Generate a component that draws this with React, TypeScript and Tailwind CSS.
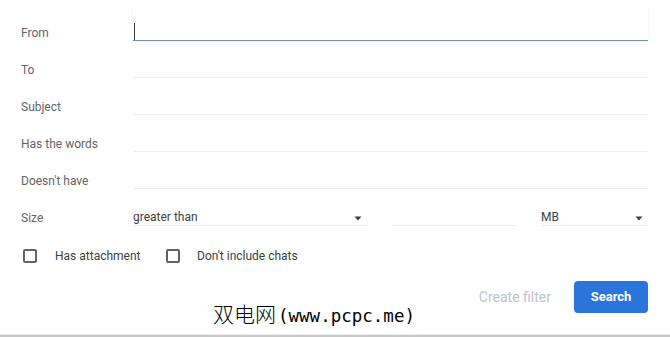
import React from "react";

function Caret() {
  return (
    <svg width="8" height="5" viewBox="0 0 8 5" className="mb-[4px] mr-[5px]">
      <path d="M0.5 0.5 L7.5 0.5 L4 4.5 Z" fill="#3c4043" />
    </svg>
  );
}

function Row({ label, children, focused }: { label: string; children?: React.ReactNode; focused?: boolean }) {
  return (
    <div className="flex h-[37px]">
      <div className="w-[112px] flex items-end leading-[16px] text-[12px] text-[#5f6368]">{label}</div>
      {children ?? (
        <div
          className={
            focused
              ? "flex-1 flex items-end border-b border-[#7d8a97] shadow-[0_2px_3px_rgba(120,170,230,0.15)]"
              : "flex-1 border-b border-[#ececec]"
          }
        >
          {focused && <div className="w-px h-[17px] bg-[#333333] ml-[1px]" />}
        </div>
      )}
    </div>
  );
}

function Checkbox() {
  return <div className="w-[14px] h-[14px] border-2 border-[#5f6368] rounded-[2px] shrink-0" />;
}

export default function App() {
  return (
    <div className="w-[670px] h-[337px] bg-white relative flex flex-col font-['Roboto',sans-serif]">
      <div className="flex-1 pl-[21px] pr-[22px] pt-[4px]">
        <Row label="From" focused />
        <Row label="To" />
        <Row label="Subject" />
        <Row label="Has the words" />
        <Row label="Doesn't have" />
        <Row label="Size">
          <div className="flex-1 flex gap-[24px]">
            <div className="w-[234px] flex items-end justify-between border-b border-[#ececec]">
              <span className="leading-[16px] text-[12px] text-[#3c4043]">greater than</span>
              <Caret />
            </div>
            <div className="w-[126px] border-b border-[#ececec]" />
            <div className="flex-1 flex items-end justify-between border-b border-[#ececec]">
              <span className="leading-[16px] text-[12px] text-[#3c4043]">MB</span>
              <Caret />
            </div>
          </div>
        </Row>
        <div className="flex h-[37px] items-end">
          <div className="w-[145px] flex items-end gap-[18px] pl-[2px]">
            <Checkbox />
            <span className="leading-[14px] text-[12px] text-[#3c4043]">Has attachment</span>
          </div>
          <div className="flex items-end gap-[17px]">
            <Checkbox />
            <span className="leading-[14px] text-[12px] text-[#3c4043]">Don't include chats</span>
          </div>
        </div>
        <div className="flex justify-end items-center gap-[23px] mt-[18px]">
          <span className="text-[14px] text-[#c0c3c7]">Create filter</span>
          <div className="w-[74px] h-[32px] rounded-[4px] bg-[#2b74db] flex items-center justify-center text-[13px] font-bold text-white">
            Search
          </div>
        </div>
      </div>
      <div className="h-px bg-[#eeeeee]" />
      <div className="h-[2px] bg-[#c8c8c8]" />
      <div className="absolute left-[213px] top-[300px] flex items-baseline text-black">
        <span className="text-[21px] leading-[26px] font-['Noto_Sans_CJK_SC',sans-serif] font-light">双电网</span>
        <span className="text-[17.5px] leading-[26px] font-['DejaVu_Sans_Mono',monospace] ml-[2px]">(www.pcpc.me)</span>
      </div>
    </div>
  );
}
